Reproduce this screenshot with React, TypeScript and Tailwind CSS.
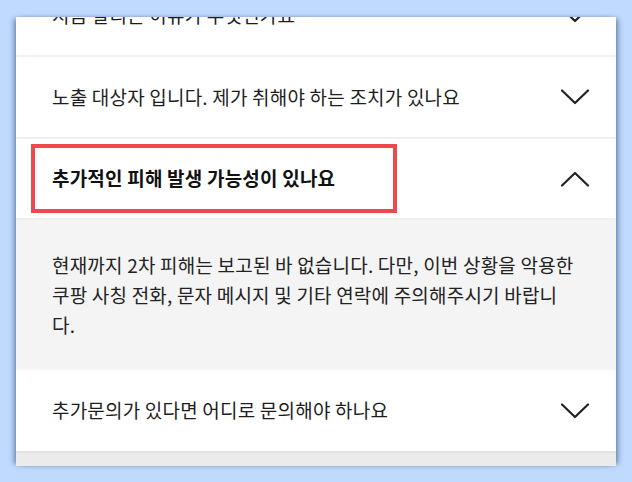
const font = "font-['Noto_Sans_CJK_KR','Noto_Sans',sans-serif]";

function Chevron({ up = false }: { up?: boolean }) {
  return (
    <svg width="30" height="16" viewBox="0 0 30 16" fill="none" className="shrink-0">
      <path
        d={up ? "M2 14.5 L15 2 L28 14.5" : "M2 1.5 L15 14 L28 1.5"}
        stroke="#222"
        strokeWidth="2.2"
        strokeLinecap="round"
        strokeLinejoin="round"
      />
    </svg>
  );
}

function Row({ q, className = "" }: { q: string; className?: string }) {
  return (
    <div className={`flex h-[82px] items-center justify-between border-b-2 border-[#efefef] pl-9 pr-[26px] ${className}`}>
      <span className="text-[19px] tracking-[0.2px] text-[#1d1d1d]">{q}</span>
      <Chevron />
    </div>
  );
}

export default function App() {
  return (
    <div className={`h-[482px] w-[632px] bg-[#bfdafc] px-4 pt-[17px] ${font}`}>
      <div className="h-[449px] overflow-hidden bg-white shadow-[-4px_0_5px_-2px_rgba(40,60,110,0.55),4px_0_5px_-2px_rgba(40,60,110,0.55)]">
        <Row q="지금 알리는 이유가 무엇인가요" className="-mt-[42px]" />
        <Row q="노출 대상자 입니다. 제가 취해야 하는 조치가 있나요" />

        <div className="flex h-[81px] items-center justify-between border-b-2 border-[#efefef] pl-[15px] pr-[26px]">
          <div className="flex h-[69px] w-[366px] items-center border-4 border-[#ee4a4e] pl-[17px]">
            <span className="text-[19px] font-bold tracking-[0.2px] text-[#111]">
              추가적인 피해 발생 가능성이 있나요
            </span>
          </div>
          <Chevron up />
        </div>

        <div className="h-[150px] bg-[#f4f4f4] pl-9 pr-5 pt-[30px]">
          <p className="text-[19px] leading-[30px] tracking-[0.2px] text-[#222]">
            현재까지 2차 피해는 보고된 바 없습니다. 다만, 이번 상황을 악용한
            <br />
            쿠팡 사칭 전화, 문자 메시지 및 기타 연락에 주의해주시기 바랍니
            <br />
            다.
          </p>
        </div>

        <div className="flex h-[81px] items-center justify-between pl-9 pr-[26px]">
          <span className="text-[19px] tracking-[0.2px] text-[#1d1d1d]">추가문의가 있다면 어디로 문의해야 하나요</span>
          <Chevron />
        </div>
        <div className="h-[15px] border-t-2 border-[#e2e2e2] bg-[#ebebeb]" />
      </div>
    </div>
  );
}
